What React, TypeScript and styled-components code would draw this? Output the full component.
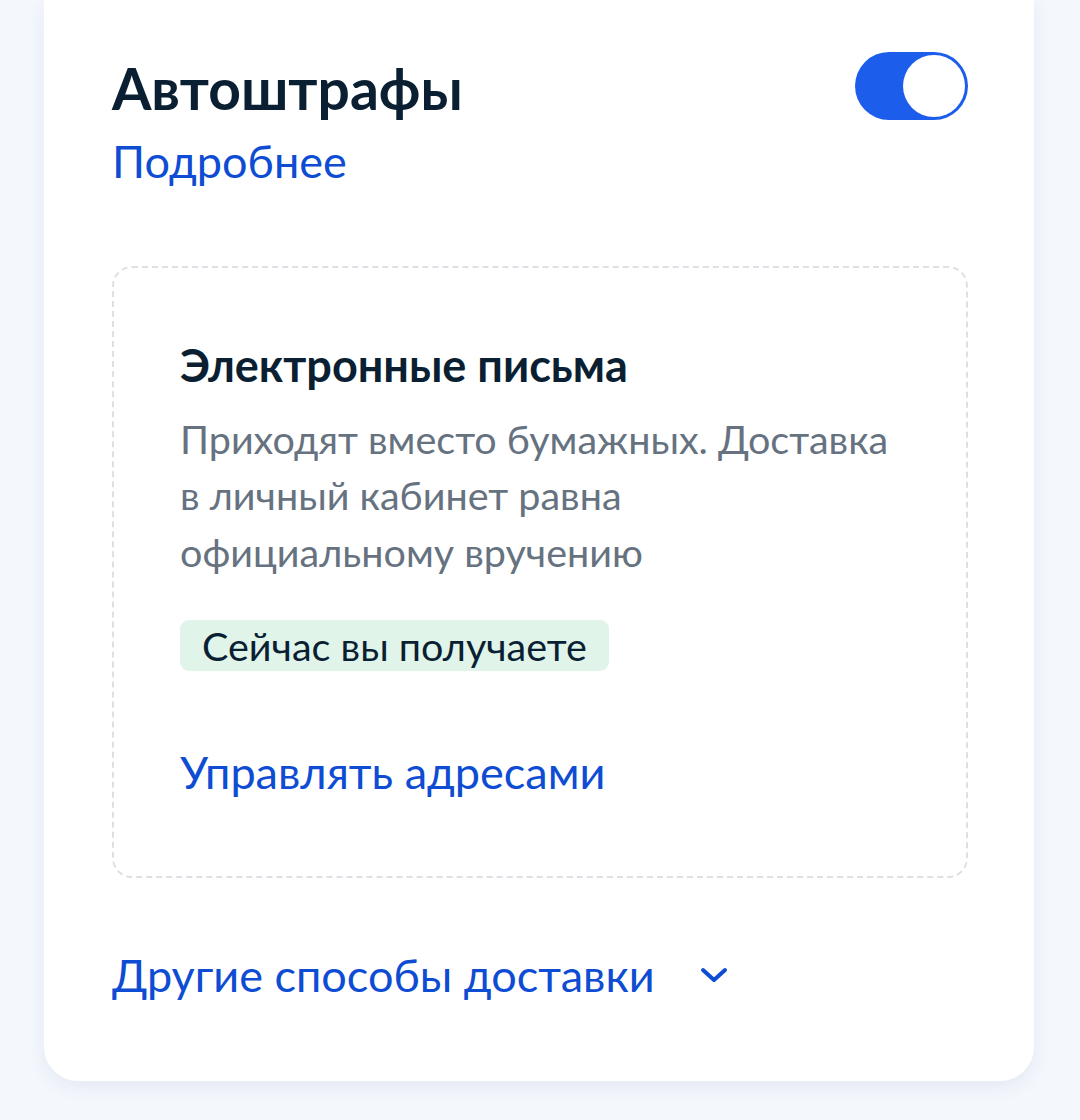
import styled, { createGlobalStyle } from "styled-components";

const GlobalStyle = createGlobalStyle`
  html, body {
    margin: 0;
    padding: 0;
    background-color: #f4f7fc;
    font-family: Lato, "Noto Sans", sans-serif;
  }
`;

const Page = styled.div`
  width: 1080px;
  height: 1120px;
  padding: 0 46px 0 44px;
  box-sizing: border-box;
`;

const Card = styled.section`
  background-color: #ffffff;
  border-radius: 0 0 34px 34px;
  box-shadow: 0 6px 18px rgba(32, 70, 150, 0.08);
  padding: 50px 66px 77px 68px;
  box-sizing: border-box;
`;

const Header = styled.div`
  display: flex;
  align-items: flex-start;
  justify-content: space-between;
`;

const HeaderText = styled.div`
  display: flex;
  flex-direction: column;
  align-items: flex-start;
`;

const Title = styled.h1`
  margin: 0;
  font-size: 57px;
  line-height: 76px;
  font-weight: 700;
  color: #0b1f33;
`;

const Link = styled.a<{ size: number }>`
  color: #0d4cd3;
  font-size: ${({ size }) => size}px;
  line-height: 1.3;
  text-decoration: none;
  cursor: pointer;
`;

const MoreLink = styled(Link)`
  margin-top: 6px;
`;

const Toggle = styled.button<{ on: boolean }>`
  width: 113px;
  height: 68px;
  margin-top: 2px;
  border: none;
  border-radius: 34px;
  padding: 3px;
  display: flex;
  justify-content: ${({ on }) => (on ? "flex-end" : "flex-start")};
  background-color: ${({ on }) => (on ? "#1d5deb" : "#b8c1cc")};
  cursor: pointer;
  box-sizing: border-box;
`;

const Knob = styled.span`
  width: 62px;
  height: 62px;
  border-radius: 50%;
  background-color: #ffffff;
`;

const DashedBox = styled.div`
  margin-top: 75px;
  border: 2px dashed #dde1e6;
  border-radius: 20px;
  padding: 68px 66px 74px 66px;
  display: flex;
  flex-direction: column;
  align-items: flex-start;
`;

const BoxTitle = styled.h2`
  margin: 0;
  font-size: 45px;
  line-height: 58px;
  font-weight: 700;
  color: #0b1f33;
`;

const Description = styled.p`
  margin: 17px 0 0;
  font-size: 39.5px;
  line-height: 56.5px;
  color: #66727f;
`;

const Badge = styled.span`
  margin-top: 40px;
  padding: 0 22px;
  height: 51px;
  display: inline-flex;
  align-items: center;
  border-radius: 9px;
  background-color: #e0f4ea;
  color: #0b1f33;
  font-size: 39.5px;
`;

const ManageRow = styled.div`
  margin-top: 72px;
`;

const OtherRow = styled.div`
  margin-top: 68px;
  display: flex;
  align-items: center;
  gap: 44px;
`;

const Chevron = () => (
  <svg width="30" height="20" viewBox="0 0 30 20" fill="none">
    <path
      d="M4 5l11 10L26 5"
      stroke="#0d4cd3"
      strokeWidth="4"
      strokeLinecap="round"
      strokeLinejoin="round"
    />
  </svg>
);

export default function App() {
  return (
    <>
      <GlobalStyle />
      <Page>
        <Card>
          <Header>
            <HeaderText>
              <Title>Автоштрафы</Title>
              <MoreLink size={45}>Подробнее</MoreLink>
            </HeaderText>
            <Toggle on={true} aria-label="Автоштрафы">
              <Knob />
            </Toggle>
          </Header>

          <DashedBox>
            <BoxTitle>Электронные письма</BoxTitle>
            <Description>
              Приходят вместо бумажных. Доставка
              <br />в личный кабинет равна
              <br />
              официальному вручению
            </Description>
            <Badge>Сейчас вы получаете</Badge>
            <ManageRow>
              <Link size={45}>Управлять адресами</Link>
            </ManageRow>
          </DashedBox>

          <OtherRow>
            <Link size={45}>Другие способы доставки</Link>
            <Chevron />
          </OtherRow>
        </Card>
      </Page>
    </>
  );
}
